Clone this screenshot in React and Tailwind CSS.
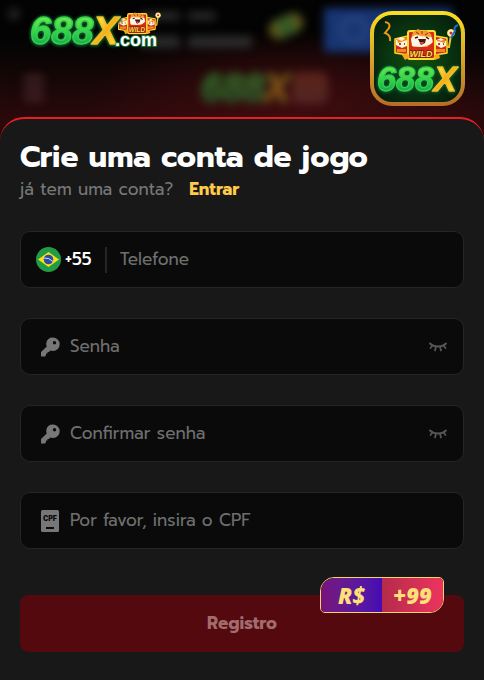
import React, { useState } from 'react';

const Reels = ({ className }) => (
  <svg className={className} viewBox="0 0 62 34" aria-hidden="true">
    <g stroke="#f8e02c" strokeWidth="1.5" strokeLinejoin="round">
      <path d="M2 12 L15 9 V28 L2 26 Z" fill="#cf2a1c" />
      <path d="M42 9 L54 11 V26 L42 28 Z" fill="#cf2a1c" />
    </g>
    <path d="M3 13 L8 10 L14 12 V19 L9 21 L3 18 Z" fill="#fff1d2" />
    <path d="M4 12 L9 14 L14 10 V13 L5 16 Z M4 22 H13 V25 H4 Z" fill="#f08a20" />
    <path d="M43 13 L48 11 L53 14 V19 L48 21 L43 18 Z" fill="#fff1d2" />
    <path d="M44 12 L48 14 L52 12 V16 L44 14 Z M43 22 H52 V25 H43 Z" fill="#f08a20" />
    <path d="M6 17 H8 M11 17 H12 M45 17 H47 M50 17 H51" stroke="#7b1710" strokeWidth="1.5" />
    <path d="M54 20 H56 L58 8" stroke="#f4c125" strokeWidth="2" fill="none" />
    <circle cx="58" cy="6" r="3.5" fill="#fff6df" stroke="#f8d928" strokeWidth="1" />
    <circle cx="58" cy="6" r="1.5" fill="#d9241c" />
    <rect x="15" y="4" width="27" height="28" rx="2" fill="#d62a1b" stroke="#f8e02c" strokeWidth="2" />
    <path d="M18 12 L20 5 L25 2 L29 4 L33 3 L38 7 L40 15 L34 20 H20 Z" fill="#f59a2d" />
    <path d="M18 12 Q21 6 27 9 L38 10 Q42 15 36 18 L28 20 L19 19 Z" fill="#fff5e2" />
    <path d="M23 5 L26 7 M29 4 V7 M35 6 L32 8" stroke="#8c2f12" strokeWidth="1" />
    <path d="M22 11 L25 10 M33 10 L36 12" stroke="#35130c" strokeWidth="1.5" />
    <path d="M25 12 H33 L32 16 L28 18 Z" fill="#4c130d" />
    <path d="M27 15 H31 L29 18 Z" fill="#f04b40" />
    <path d="M9 28 L14 26 L17 30 L12 33 Z M41 28 L46 27 L47 31 L42 33 Z" fill="#f5a81f" />
    <text
      x="28"
      y="30"
      textAnchor="middle"
      fontFamily="Liberation Sans, sans-serif"
      fontSize="9"
      fontWeight="700"
      fontStyle="italic"
      fill="#ffe14a"
      stroke="#7a150c"
      strokeWidth="1.5"
      paintOrder="stroke"
    >
      WILD
    </text>
  </svg>
);

const Wordmark = ({ className, id, dotCom }) => (
  <svg className={className} viewBox={dotCom ? '0 0 132 40' : '0 0 92 40'} overflow="visible" role="img" aria-label="688X">
    <defs>
      <linearGradient id={`${id}-green`} x1="0" y1="0" x2="0" y2="1">
        <stop offset="0.1" stopColor="#7af04c" />
        <stop offset="0.5" stopColor="#35d64c" />
        <stop offset="0.85" stopColor="#12a848" />
      </linearGradient>
      <linearGradient id={`${id}-gold`} x1="0" y1="0" x2="1" y2="1">
        <stop offset="0.2" stopColor="#fff04a" />
        <stop offset="0.5" stopColor="#f2ae1d" />
        <stop offset="0.8" stopColor="#fbdf38" />
      </linearGradient>
    </defs>
    <g fontFamily="Liberation Sans, sans-serif" fontWeight="700" strokeLinejoin="round">
      <g
        className="[filter:drop-shadow(0_0_1px_#0b5527)_drop-shadow(0_0_1px_#0b5527)_drop-shadow(0_1px_1px_#0b4323)]"
        fontSize="38"
        fontStyle="italic"
        strokeWidth="1.5"
      >
        <text x="1" y="33" fill={`url(#${id}-green)`} stroke="#38cf4e">688</text>
        <text x="64" y="33" fill={`url(#${id}-gold)`} stroke="#f3bb24">X</text>
      </g>
      {dotCom && (
        <text x="86" y="35" fontSize="18" fill="#fff" stroke="#14733a" strokeWidth="2" paintOrder="stroke">
          .com
        </text>
      )}
    </g>
  </svg>
);

const BrazilFlag = () => (
  <svg className="size-[25px] shrink-0" viewBox="0 0 25 25" aria-hidden="true">
    <circle cx="12.5" cy="12.5" r="12.5" fill="#229b46" />
    <path d="M2 12.5 L12.5 5 L23 12.5 L12.5 20 Z" fill="#f8df1c" />
    <circle cx="12.5" cy="12.5" r="4.8" fill="#2b4da5" />
    <path d="M8 11 Q13 10.5 17 14.5" fill="none" stroke="#cfdcf2" strokeWidth="1" />
  </svg>
);

const KeyIcon = () => (
  <svg className="size-5 shrink-0" viewBox="0 0 20 20" aria-hidden="true">
    <path
      fillRule="evenodd"
      fill="#777"
      d="M13 0.5 A6.7 6.7 0 0 1 13 13.9 Q11.500 14 10.3 13.5 L9 15 H7.5 V16.5 H6 V18 L5 19.5 H1.5 Q1 19.5 1 19 V15 L6.800 9.5 Q6 8 6.300 6 A6.700 6.700 0 0 1 13 0.5 Z M14.5 4 A1.700 1.700 0 1 0 14.500 7.400 A1.700 1.700 0 1 0 14.500 4 Z"
    />
  </svg>
);

const CpfIcon = () => (
  <svg className="h-[22px] w-5 shrink-0" viewBox="0 0 20 22" aria-hidden="true">
    <rect x="1" y="0" width="18" height="22" rx="1.5" fill="#777" />
    <text x="10" y="11" textAnchor="middle" fontFamily="Inter, sans-serif" fontSize="7" fontWeight="900" fill="#0a0a0a">
      CPF
    </text>
    <path d="M6 18 H14" stroke="#0a0a0a" strokeWidth="2" />
  </svg>
);

const ClosedEye = () => (
  <svg className="h-[10px] w-[18px]" viewBox="0 0 18 10" fill="none" stroke="#555" strokeWidth="1.8" strokeLinecap="round" aria-hidden="true">
    <path d="M1 1.5 Q4 4.5 9 4.5 T17 1.5" />
    <path d="M3.5 3.5 L1.5 6 M7 4.5 L6 8.5 M11 4.5 L12 8.5 M14.5 3.5 L16.5 6" />
  </svg>
);

const Field = ({ id, label, icon, type = 'text' }) => {
  const [visible, setVisible] = useState(false);
  const isPassword = type === 'password';

  return (
    <div className="flex h-[57px] items-center gap-2.5 rounded-[10px] border border-[#252525] bg-[#0a0a0a] pl-[19px] pr-4">
      <label htmlFor={id}>{icon}</label>
      <input
        id={id}
        type={isPassword && visible ? 'text' : type}
        placeholder={label}
        aria-label={label}
        className="min-w-0 flex-1 bg-transparent text-[17px] text-white outline-none placeholder:text-[#6f6f6f]"
      />
      {isPassword && (
        <button type="button" aria-label="Mostrar senha" onClick={() => setVisible(!visible)}>
          <ClosedEye />
        </button>
      )}
    </div>
  );
};

const Header = () => (
  <header className="relative h-[117px] bg-linear-to-b from-[#030303] from-30% to-[#2a090b]">
    {/* dimmed page behind the sheet */}
    <div className="absolute inset-0 bg-radial-[at_60%_85%] from-[#470d10] to-transparent to-50% opacity-80" />
    <div className="absolute inset-0 overflow-hidden blur-[4px]" aria-hidden="true">
      <div className="flex h-[56px] items-start pl-2 pr-8 pt-2">
        <div className="size-3 rounded-full bg-[#242424]" />
        <div className="ml-auto mr-4 flex w-28 flex-col gap-4 pt-1">
          <div className="flex gap-2">
            <div className="h-2 w-10 rounded-sm bg-[#2b2b2b]" />
            <div className="h-2 w-7 rounded-sm bg-[#2b2b2b]" />
          </div>
          <div className="flex gap-2">
            <div className="h-3 w-10 rounded-sm bg-[#2b2b2b]" />
            <div className="h-3 w-16 rounded-sm bg-[#2b2b2b]" />
          </div>
        </div>
        <div className="mr-5 mt-2 h-5 w-9 -rotate-24 rounded-full bg-linear-to-r from-[#665417] via-[#2a5a26] to-[#665417]" />
        <div className="flex h-11 w-32 items-center bg-[#173574] pl-4">
          <div className="size-7 rounded-full border-4 border-[#2d477c]" />
        </div>
      </div>
      <div className="flex items-center justify-between pl-6 pr-[156px] pt-3">
        <div className="flex h-6 w-5 flex-col justify-between">
          <div className="h-1 bg-[#5a3436]" />
          <div className="h-1 bg-[#5a3436]" />
          <div className="h-1 bg-[#5a3436]" />
        </div>
        <div className="flex items-center opacity-40">
          <Wordmark id="back" className="h-10 w-[92px]" />
          <div className="h-8 w-9 rounded-lg bg-linear-to-b from-[#a04a30] to-[#6a4a44]" />
        </div>
      </div>
    </div>
    <div className="relative flex items-start justify-between pl-[29px] pr-[19px] pt-[11px]">
      <a href="#home" className="relative">
        <Reels className="absolute right-0 top-0 h-6 w-11" />
        <Wordmark id="logo" dotCom className="relative h-10 w-[132px]" />
      </a>
      <div className="h-[95px] w-[95px] rounded-[22px] bg-linear-to-b from-[#f9df20] to-[#b66c28] p-1">
        <div className="relative flex h-full flex-col items-center rounded-[18px] bg-radial from-[#15520e] to-[#03190b] pt-3">
          <Reels className="ml-3 h-[34px] w-[62px]" />
          <Wordmark id="app" className="h-9 w-[83px]" />
          <svg className="absolute inset-0 size-full" viewBox="0 0 87 87" fill="none" aria-hidden="true">
            <path d="M11 7 Q17 8 15 13 L11 18 Q17 20 16 26" stroke="#e89a1c" strokeWidth="2" />
            <path d="M84 10 Q79 12 81 16 L77 23" stroke="#1e6bc4" strokeWidth="2" />
          </svg>
        </div>
      </div>
    </div>
  </header>
);

export default function App() {
  return (
    <div className="min-h-screen bg-[#2a090b] font-['Prompt','Noto_Sans',sans-serif]">
      <Header />
      <main className="rounded-t-[24px] border-t-2 border-[#e91e25] bg-[#181818] px-5 pb-7 pt-5">
        <h1 className="font-[Prompt,Inter,sans-serif] text-[30px] font-bold leading-9 text-white">Crie uma conta de jogo</h1>
        <p className="flex gap-4 text-[17px] leading-7 text-[#777]">
          já tem uma conta?
          <a href="#entrar" className="font-bold text-[#ffcb4b]">Entrar</a>
        </p>
        <form onSubmit={(e) => e.preventDefault()}>
          <div className="mt-7 flex flex-col gap-[30px]">
            <div className="flex h-[57px] items-center rounded-[10px] border border-[#252525] bg-[#0a0a0a] px-[15px]">
              <label htmlFor="telefone" className="flex items-center gap-1 text-[17px] font-medium text-white">
                <BrazilFlag />
                +55
              </label>
              <div className="mx-[13px] h-[26px] w-0.5 bg-[#252525]" />
              <input
                id="telefone"
                type="tel"
                placeholder="Telefone"
                aria-label="Telefone"
                className="min-w-0 flex-1 bg-transparent text-[17px] text-white outline-none placeholder:text-[#6f6f6f]"
              />
            </div>
            <Field id="senha" label="Senha" type="password" icon={<KeyIcon />} />
            <Field id="confirmar" label="Confirmar senha" type="password" icon={<KeyIcon />} />
            <Field id="cpf" label="Por favor, insira o CPF" icon={<CpfIcon />} />
          </div>
          <div className="relative mt-[46px]">
            <button type="submit" className="h-[57px] w-full rounded-lg bg-[#53090d] text-[17px] font-bold text-[#a26b6e]">
              Registro
            </button>
            <div className="absolute -top-[18px] right-5 flex h-9 w-[124px] overflow-hidden rounded-bl-[5px] rounded-br-[14px] rounded-tl-[14px] rounded-tr-[5px] border border-[#f5d568] font-['Noto_Sans',sans-serif] text-[22px] font-black italic text-[#ffdf78]">
              <span className="flex flex-1 items-center justify-center bg-linear-to-r from-[#79127c] to-[#4609b3]">R$</span>
              <span className="flex flex-1 items-center justify-center bg-linear-to-r from-[#b52b49] to-[#ed345f]">+99</span>
            </div>
          </div>
        </form>
      </main>
    </div>
  );
}
